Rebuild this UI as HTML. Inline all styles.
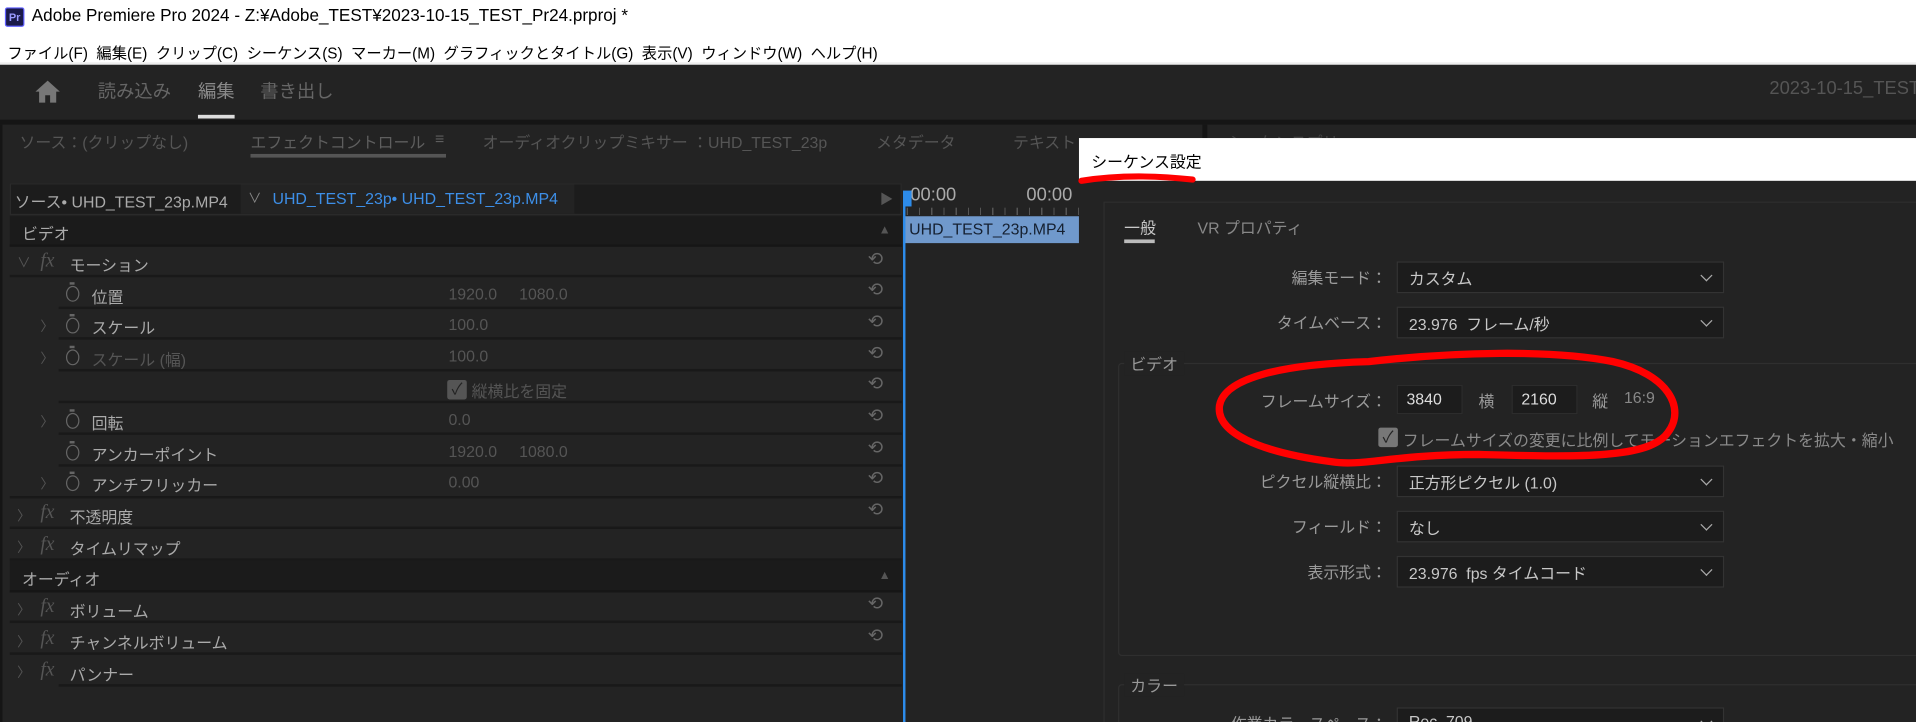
<!DOCTYPE html>
<html><head><meta charset="utf-8"><style>
*{margin:0;padding:0;box-sizing:border-box}
html,body{width:1916px;height:722px;overflow:hidden;background:#232323}
#s{position:absolute;left:0;top:0;width:1568px;height:591px;transform:scale(1.22194,1.2217);transform-origin:0 0;font-family:"Liberation Sans","Noto Sans CJK JP",sans-serif;font-size:13px;color:#999;overflow:hidden;background:#232323}
.a{position:absolute;white-space:nowrap}
.row{position:absolute;left:12px;width:726px;height:25px;border-bottom:2px solid #191919}
.fx{position:absolute;font-family:"Liberation Serif",serif;font-style:italic;font-size:16px;color:#555}
.chev{position:absolute;color:#555;font-size:11px}
.sw{position:absolute;width:11px;height:13px;border:1.5px solid #666;border-radius:50%}
.sw:before{content:"";position:absolute;left:2px;top:-4px;width:4px;height:2px;background:#666}
.rs{position:absolute;left:710px;color:#666;font-size:15px}
.dd{position:absolute;left:1143px;width:268px;height:26px;background:#1c1c1c;border:1px solid #333;color:#c8c8c8;padding:3px 9px;font-size:13px}
.dd:after{content:"";position:absolute;right:10px;top:7px;width:6px;height:6px;border-right:1px solid #aaa;border-bottom:1px solid #aaa;transform:rotate(45deg)}
.lb{position:absolute;right:433px;color:#9a9a9a;font-size:13px;text-align:right}
</style></head><body><div id="s">
<div class="a" style="left:0;top:0;width:1568px;height:52px;background:#fff"></div>
<div class="a" style="left:4px;top:6px;width:16px;height:16px;background:#1a1a4a;border:1px solid #6060ff;border-radius:2px;color:#9a9aff;font-size:9px;font-weight:bold;text-align:center;line-height:14px">Pr</div>
<div class="a" style="left:26px;top:4px;color:#000;font-size:14px">Adobe Premiere Pro 2024 - Z:¥Adobe_TEST¥2023-10-15_TEST_Pr24.prproj *</div>
<div class="a" style="left:6px;top:33px;color:#000;font-size:12.5px">ファイル(F)&nbsp; 編集(E)&nbsp; クリップ(C)&nbsp; シーケンス(S)&nbsp; マーカー(M)&nbsp; グラフィックとタイトル(G)&nbsp; 表示(V)&nbsp; ウィンドウ(W)&nbsp; ヘルプ(H)</div>
<div class="a" style="left:0;top:51px;width:1568px;height:2px;background:#eee"></div>
<svg class="a" style="left:28px;top:65px" width="22" height="20"><path d="M11 1L1 10h3v9h5v-6h4v6h5v-9h3z" fill="#777"/></svg>
<div class="a" style="left:80px;top:64px;font-size:15px;color:#666">読み込み</div>
<div class="a" style="left:162px;top:64px;font-size:15px;color:#8a8a8a">編集</div>
<div class="a" style="left:162px;top:94px;width:30px;height:3px;background:#ddd"></div>
<div class="a" style="left:213px;top:64px;font-size:15px;color:#666">書き出し</div>
<div class="a" style="left:1448px;top:64px;font-size:15px;color:#555">2023-10-15_TEST</div>
<div class="a" style="left:0;top:98px;width:1568px;height:4px;background:#151515"></div>
<div class="a" style="left:0;top:102px;width:2px;height:489px;background:#151515"></div>
<div class="a" style="left:984px;top:102px;width:4px;height:20px;background:#151515"></div>
<div class="a" style="left:16px;top:106px;color:#555">ソース：(クリップなし)</div>
<div class="a" style="left:205px;top:106px;color:#5e5e5e">エフェクトコントロール</div>
<div class="a" style="left:356px;top:106px;color:#5e5e5e">≡</div>
<div class="a" style="left:205px;top:126px;width:160px;height:3px;background:#555"></div>
<div class="a" style="left:395px;top:106px;color:#555">オーディオクリップミキサー ：UHD_TEST_23p</div>
<div class="a" style="left:717px;top:106px;color:#555">メタデータ</div>
<div class="a" style="left:829px;top:106px;color:#555">テキスト</div>
<div class="a" style="left:1005px;top:106px;color:#444">シーケンスプリ</div>
<div class="a" style="left:8px;top:150px;width:730px;height:26px;background:#1c1c1c;border:1px solid #2a2a2a"></div>
<div class="a" style="left:197px;top:151px;width:273px;height:24px;background:#232323"></div>
<div class="a" style="left:12px;top:155px;color:#aaa">ソース• UHD_TEST_23p.MP4</div>
<div class="a" style="left:203px;top:154px;color:#888;font-size:11px">∨</div>
<div class="a" style="left:223px;top:155px;color:#3d8fe8">UHD_TEST_23p• UHD_TEST_23p.MP4</div>
<div class="a" style="left:720px;top:155px;color:#555;font-size:11px">▶</div>
<div class="a" style="left:745px;top:151px;color:#aaa;font-size:15px">00:00</div>
<div class="a" style="left:840px;top:151px;color:#aaa;font-size:15px">00:00</div>
<div class="a" style="left:742px;top:170px;width:141px;height:6px;background:repeating-linear-gradient(90deg,#555 0 1px,transparent 1px 10px)"></div>
<div class="a" style="left:740px;top:177px;width:143px;height:22px;background:#7099cc;color:#152030;padding:3px 4px;font-size:13px">UHD_TEST_23p.MP4</div>
<div class="a" style="left:739px;top:158px;width:2px;height:433px;background:#2d8ceb"></div>
<div class="a" style="left:739px;top:156px;width:7px;height:13px;background:#2d8ceb"></div>
<div class="a" style="left:8px;top:177px;width:730px;height:25px;background:#1b1b1b;border-bottom:2px solid #161616"></div>
<div class="a" style="left:18px;top:181px;color:#aaa">ビデオ</div>
<div class="a" style="left:719px;top:183px;color:#555;font-size:10px">▲</div>
<div class="row" style="top:202px;left:8px;width:730px"></div><div class="chev" style="left:14px;top:207px">∨</div><div class="fx" style="left:33px;top:205px">fx</div><div class="a" style="left:57px;top:207px;color:#aaa">モーション</div><div class="rs" style="top:203px">⟲</div>
<div class="row" style="top:228px;left:48px;width:690px"></div><div class="sw" style="left:54px;top:234px"></div><div class="a" style="left:75px;top:233px;color:#aaa">位置</div><div class="a" style="left:367px;top:233px;color:#555">1920.0&nbsp;&nbsp;&nbsp;&nbsp; 1080.0</div><div class="rs" style="top:228px">⟲</div>
<div class="row" style="top:253px;left:48px;width:690px"></div><div class="chev" style="left:33px;top:259px">〉</div><div class="sw" style="left:54px;top:260px"></div><div class="a" style="left:75px;top:258px;color:#aaa">スケール</div><div class="a" style="left:367px;top:258px;color:#555">100.0</div><div class="rs" style="top:254px">⟲</div>
<div class="row" style="top:279px;left:48px;width:690px"></div><div class="chev" style="left:33px;top:285px">〉</div><div class="sw" style="left:54px;top:286px"></div><div class="a" style="left:75px;top:284px;color:#555">スケール (幅)</div><div class="a" style="left:367px;top:284px;color:#555">100.0</div><div class="rs" style="top:280px">⟲</div>
<div class="row" style="top:305px;left:48px;width:690px"></div><div class="a" style="left:366px;top:311px;width:16px;height:16px;background:#555;border-radius:2px;color:#222;font-size:13px;text-align:center;line-height:16px">✓</div><div class="a" style="left:386px;top:310px;color:#555">縦横比を固定</div><div class="rs" style="top:305px">⟲</div>
<div class="row" style="top:331px;left:48px;width:690px"></div><div class="chev" style="left:33px;top:337px">〉</div><div class="sw" style="left:54px;top:338px"></div><div class="a" style="left:75px;top:336px;color:#aaa">回転</div><div class="a" style="left:367px;top:336px;color:#555">0.0</div><div class="rs" style="top:331px">⟲</div>
<div class="row" style="top:357px;left:48px;width:690px"></div><div class="sw" style="left:54px;top:364px"></div><div class="a" style="left:75px;top:362px;color:#aaa">アンカーポイント</div><div class="a" style="left:367px;top:362px;color:#555">1920.0&nbsp;&nbsp;&nbsp;&nbsp; 1080.0</div><div class="rs" style="top:357px">⟲</div>
<div class="row" style="top:383px;left:8px;width:730px"></div><div class="chev" style="left:33px;top:388px">〉</div><div class="sw" style="left:54px;top:389px"></div><div class="a" style="left:75px;top:387px;color:#aaa">アンチフリッカー</div><div class="a" style="left:367px;top:387px;color:#555">0.00</div><div class="rs" style="top:382px">⟲</div>
<div class="row" style="top:408px;left:8px;width:730px"></div><div class="chev" style="left:14px;top:414px">〉</div><div class="fx" style="left:33px;top:411px">fx</div><div class="a" style="left:57px;top:413px;color:#aaa">不透明度</div><div class="rs" style="top:408px">⟲</div>
<div class="row" style="top:434px;left:8px;width:730px"></div><div class="chev" style="left:14px;top:440px">〉</div><div class="fx" style="left:33px;top:437px">fx</div><div class="a" style="left:57px;top:439px;color:#aaa">タイムリマップ</div>
<div class="a" style="left:8px;top:459px;width:730px;height:26px;background:#1b1b1b;border-bottom:2px solid #161616"></div>
<div class="a" style="left:18px;top:464px;color:#aaa">オーディオ</div><div class="a" style="left:719px;top:466px;color:#555;font-size:10px">▲</div>
<div class="row" style="top:485px;left:8px;width:730px"></div><div class="chev" style="left:14px;top:491px">〉</div><div class="fx" style="left:33px;top:488px">fx</div><div class="a" style="left:57px;top:490px;color:#aaa">ボリューム</div><div class="rs" style="top:485px">⟲</div>
<div class="row" style="top:511px;left:8px;width:730px"></div><div class="chev" style="left:14px;top:517px">〉</div><div class="fx" style="left:33px;top:514px">fx</div><div class="a" style="left:57px;top:516px;color:#aaa">チャンネルボリューム</div><div class="rs" style="top:511px">⟲</div>
<div class="row" style="top:537px;left:48px;width:690px"></div><div class="chev" style="left:14px;top:542px">〉</div><div class="fx" style="left:33px;top:540px">fx</div><div class="a" style="left:57px;top:542px;color:#aaa">パンナー</div>
<div class="a" style="left:883px;top:113px;width:685px;height:478px;background:#232323"></div>
<div class="a" style="left:883px;top:113px;width:685px;height:35px;background:#fff"></div>
<div class="a" style="left:893px;top:122px;color:#000;font-size:13px">シーケンス設定</div>
<svg class="a" style="left:880px;top:138px" width="110" height="16"><path d="M5 10C30 6 60 5 96 9" stroke="#f00" stroke-width="5" fill="none" stroke-linecap="round"/></svg>
<div class="a" style="left:903px;top:165px;width:680px;height:440px;border:1px solid #2e2e2e"></div>
<div class="a" style="left:920px;top:176px;color:#c8c8c8">一般</div>
<div class="a" style="left:920px;top:196px;width:25px;height:3px;background:#bbb"></div>
<div class="a" style="left:980px;top:176px;color:#888">VR プロパティ</div>
<div class="lb" style="top:217px">編集モード：</div><div class="dd" style="top:214px">カスタム</div>
<div class="lb" style="top:254px">タイムベース：</div><div class="dd" style="top:251px">23.976&nbsp; フレーム/秒</div>
<div class="a" style="left:915px;top:297px;width:660px;height:240px;border:1px solid #2f2f2f;border-radius:3px"></div>
<div class="a" style="left:920px;top:288px;background:#232323;color:#999;padding:0 5px">ビデオ</div>
<div class="lb" style="top:318px">フレームサイズ：</div>
<div class="a" style="left:1143px;top:315px;width:54px;height:24px;background:#1c1c1c;border:1px solid #2c2c2c;color:#ddd;padding:3px 7px">3840</div>
<div class="a" style="left:1210px;top:318px;color:#999">横</div>
<div class="a" style="left:1237px;top:315px;width:54px;height:24px;background:#1c1c1c;border:1px solid #2c2c2c;color:#ddd;padding:3px 7px">2160</div>
<div class="a" style="left:1303px;top:318px;color:#999">縦</div>
<div class="a" style="left:1329px;top:318px;color:#888">16:9</div>
<div class="a" style="left:1128px;top:350px;width:16px;height:16px;background:#777;border-radius:2px;color:#222;font-size:13px;text-align:center;line-height:16px">✓</div>
<div class="a" style="left:1148px;top:350px;color:#8a8a8a">フレームサイズの変更に比例してモーションエフェクトを拡大・縮小</div>
<div class="lb" style="top:384px">ピクセル縦横比：</div><div class="dd" style="top:381px">正方形ピクセル (1.0)</div>
<div class="lb" style="top:421px">フィールド：</div><div class="dd" style="top:418px">なし</div>
<div class="lb" style="top:458px">表示形式：</div><div class="dd" style="top:455px">23.976&nbsp; fps タイムコード</div>
<div class="a" style="left:915px;top:560px;width:660px;height:60px;border:1px solid #2f2f2f;border-radius:3px"></div>
<div class="a" style="left:920px;top:551px;background:#232323;color:#999;padding:0 5px">カラー</div>
<div class="lb" style="top:582px">作業カラースペース：</div><div class="dd" style="top:579px">Rec. 709</div>
<svg class="a" style="left:990px;top:284px" width="392" height="105"><path d="M130 12C200 4 280 2 330 12C375 22 390 50 375 70C360 92 300 90 220 88C150 88 125 98 100 94C40 86 5 70 8 48C12 25 60 14 130 12Z" stroke="#f00" stroke-width="6" fill="none"/></svg>
</div></body></html>
